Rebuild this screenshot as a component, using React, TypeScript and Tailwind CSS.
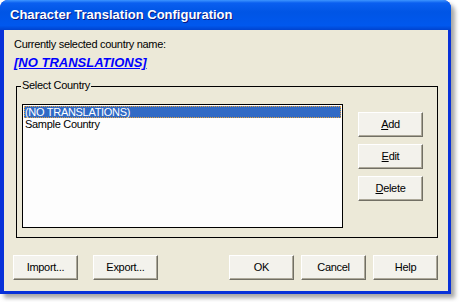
import React from "react";

function Btn({ children, className = "" }: { children: React.ReactNode; className?: string }) {
  return (
    <div
      className={
        "w-[65px] h-[25px] flex items-center justify-center bg-[#f3f2ec] border-t border-l border-white border-b border-r border-b-[#716f64] border-r-[#716f64] shadow-[inset_-1px_-1px_0_#aca899] text-[11px] text-black leading-none " +
        className
      }
    >
      {children}
    </div>
  );
}

export default function App() {
  const font = { fontFamily: '"Liberation Sans", Arial, sans-serif' };
  return (
    <div className="w-[460px] h-[302px] bg-white overflow-hidden tracking-[-0.3px]" style={font}>
      <div className="w-[451px] h-[294px] flex flex-col rounded-t-[8px] shadow-[4px_4px_4px_rgba(0,0,0,0.35)] bg-[#0831d9]">
        {/* Title bar */}
        <div className="h-[30px] shrink-0 rounded-t-[8px] flex items-center pl-[10px] bg-[linear-gradient(to_bottom,#3d95ff_0%,#0a5ff0_10%,#0055e5_40%,#0058ee_85%,#0043cf_100%)]">
          <span className="text-white font-bold text-[13px] tracking-[0px] [text-shadow:1px_1px_0_#0a1883]">
            Character Translation Configuration
          </span>
        </div>
        {/* Client */}
        <div className="flex-1 ml-[4px] mr-[3px] mb-[3px] bg-[#ece9d8] flex flex-col pt-[8px] text-black">
          <div className="pl-[10px] text-[11px] leading-[13px]">Currently selected country name:</div>
          <div className="pl-[10px] mt-[4px] text-[13px] leading-[15px] font-bold italic underline text-[#0000ff] tracking-[0px]">
            [NO TRANSLATIONS]
          </div>
          {/* Group box */}
          <div className="relative ml-[12px] mt-[16px] w-[422px] h-[152px] border border-black pl-[5px] pt-[17px] flex">
            <div className="absolute top-[-8px] left-[4px] px-[1px] bg-[#ece9d8] text-[11px] leading-[13px]">
              Select Country
            </div>
            <div className="w-[321px] h-[124px] border border-black bg-[#fdfdfd] pt-[1px] px-[1px] text-[11px]">
              <div className="h-[12px] leading-[12px] bg-[#316ac5] text-white outline outline-1 outline-dotted outline-[#e0a040] -outline-offset-1 pl-[1px]">
                (NO TRANSLATIONS)
              </div>
              <div className="h-[13px] leading-[13px] pl-[1px]">Sample Country</div>
            </div>
            <div className="ml-[15px] mt-[8px] flex flex-col gap-[7px]">
              <Btn>
                <span className="underline">A</span>dd
              </Btn>
              <Btn>
                <span className="underline">E</span>dit
              </Btn>
              <Btn>
                <span className="underline">D</span>elete
              </Btn>
            </div>
          </div>
          {/* Bottom buttons */}
          <div className="flex mt-[17px] pl-[9px] pr-[10px]">
            <Btn>Import...</Btn>
            <Btn className="ml-[15px]">Export...</Btn>
            <div className="flex-1" />
            <div className="flex gap-[7px]">
              <Btn>OK</Btn>
              <Btn>Cancel</Btn>
              <Btn>Help</Btn>
            </div>
          </div>
        </div>
      </div>
    </div>
  );
}
